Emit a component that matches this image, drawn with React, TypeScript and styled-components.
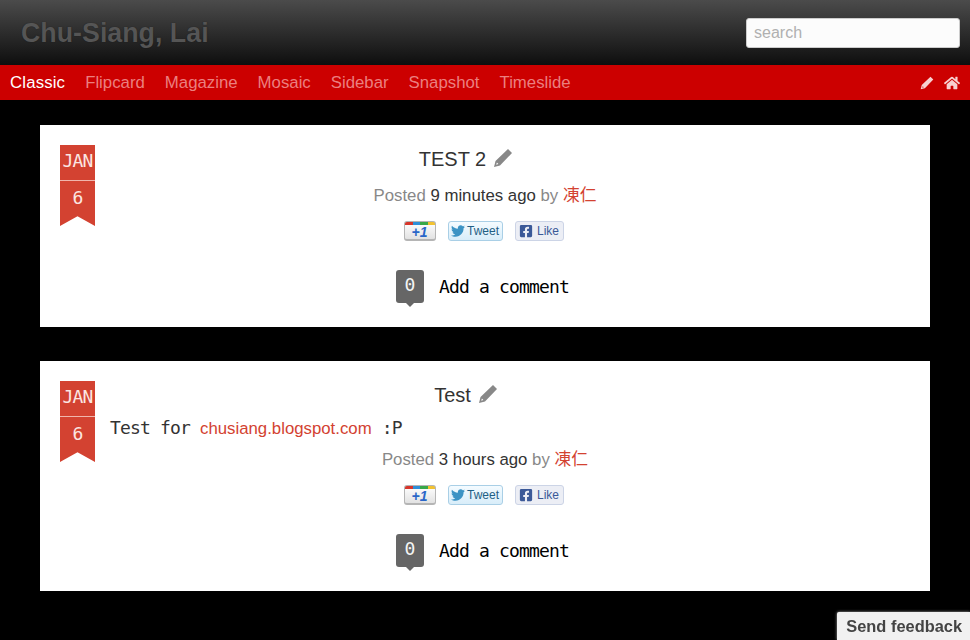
import styled, { createGlobalStyle } from "styled-components";
import { FaFacebookSquare, FaHome, FaTwitter } from "react-icons/fa";

type PostType = {
	title: string;
	age: string;
	body?: boolean;
};

const posts: PostType[] = [
	{ title: "TEST 2", age: "9 minutes ago" },
	{ title: "Test", age: "3 hours ago", body: true },
];

const links = ["Classic", "Flipcard", "Magazine", "Mosaic", "Sidebar", "Snapshot", "Timeslide"];

const Pencil = () => {
	return (
		<svg viewBox="0 0 20 20" width="1em" height="1em" fill="currentColor">
			<path
				fillRule="evenodd"
				d="M15 1 L19 5 L7 17.5 L1 19 L2.5 13 Z M3.9 14.6 L3.2 16.8 L5.4 16.1 Z"
			/>
		</svg>
	);
};

const Post = (props: PostType) => {
	return (
		<Card>
			<Ribbon>
				<Month>JAN</Month>
				<Day>6</Day>
			</Ribbon>
			<Title>
				{props.title}
				<Pencil />
			</Title>
			{props.body && (
				<Body>
					Test for <BodyLink href="#">chusiang.blogspot.com</BodyLink> :P
				</Body>
			)}
			<Meta>
				Posted <Age>{props.age}</Age> by <Author href="#">凍仁</Author>
			</Meta>
			<Social>
				<PlusOne>+1</PlusOne>
				<Tweet>
					<FaTwitter />
					Tweet
				</Tweet>
				<Like>
					<FaFacebookSquare />
					Like
				</Like>
			</Social>
			<Comments>
				<Count>0</Count>
				<AddComment href="#">Add a comment</AddComment>
			</Comments>
		</Card>
	);
};

export default function App() {
	return (
		<>
			<GlobalStyle />
			<Header>
				<Logo>Chu-Siang, Lai</Logo>
				<Search placeholder="search" />
			</Header>
			<Nav>
				{links.map((link, i) => (
					<NavLink key={link} href="#" $active={i === 0}>
						{link}
					</NavLink>
				))}
				<NavIcons>
					<Pencil />
					<FaHome />
				</NavIcons>
			</Nav>
			<Main>
				{posts.map((post) => (
					<Post key={post.title} {...post} />
				))}
			</Main>
			<Feedback>Send feedback</Feedback>
		</>
	);
}

const GlobalStyle = createGlobalStyle`
	html, body {
		margin: 0;
		height: 100%;
		overflow: hidden;
		background: #000;
		font-family: "Liberation Sans", "Noto Sans CJK TC", sans-serif;
	}
`;

const Header = styled.header`
	height: 65px;
	box-sizing: border-box;
	padding: 0 10px 0 21px;
	display: flex;
	align-items: center;
	justify-content: space-between;
	background: linear-gradient(#4b4b4b, #0e0e0e);
`;

const Logo = styled.h1`
	margin: 2px 0 0;
	font-size: 26.8px;
	font-weight: bold;
	color: #555;
	text-shadow: 0 0 1px rgba(0, 0, 0, 0.5);
`;

const Search = styled.input`
	width: 214px;
	height: 30px;
	box-sizing: border-box;
	padding: 0 7px;
	border: 1px solid #ccc;
	border-radius: 3px;
	background: #fcfcfc;
	font-family: inherit;
	font-size: 16px;
	outline: none;

	&::placeholder {
		color: #b0b0b0;
	}
`;

const Nav = styled.nav`
	height: 35px;
	padding: 0 10px;
	display: flex;
	align-items: center;
	gap: 20px;
	background: #cc0000;
`;

const NavLink = styled.a<{ $active?: boolean }>`
	font-size: 16.8px;
	letter-spacing: ${(props) => (props.$active ? "0.15px" : "0")};
	text-decoration: none;
	color: ${(props) => (props.$active ? "#fff" : "#eb7f7f")};
`;

const NavIcons = styled.div`
	margin-left: auto;
	display: flex;
	align-items: center;
	gap: 10px;
	color: #f7d0d0;
	font-size: 14px;

	svg:last-child {
		font-size: 16px;
	}
`;

const Main = styled.main`
	padding: 25px 40px 0;
	display: flex;
	flex-direction: column;
	gap: 34px;
`;

const Card = styled.article`
	position: relative;
	padding: 20px 20px 24px 70px;
	background: #fff;
	text-align: center;
`;

const Ribbon = styled.div`
	position: absolute;
	top: 20px;
	left: 20px;
	width: 35px;
	height: 81px;
	color: #fbe6e2;
	background: #d34231;
	font-family: "DejaVu Sans Mono", monospace;
	font-size: 18px;
	letter-spacing: -0.84px;
	clip-path: polygon(0 0, 100% 0, 100% 100%, 50% 88%, 0 100%);
`;

const Month = styled.div`
	height: 35px;
	line-height: 31px;
	border-bottom: 1px solid #f0b5ac;
`;

const Day = styled.div`
	line-height: 34px;
`;

const Title = styled.h2`
	margin: 0 0 0 -70px;
	padding: 0 18px 4px 0;
	height: 28px;
	font-size: 20px;
	font-weight: normal;
	line-height: 28px;
	color: #333;

	svg {
		margin-left: 7px;
		font-size: 20px;
		color: #888;
		vertical-align: -2px;
	}
`;

const Body = styled.p`
	margin: 0;
	height: 28px;
	line-height: 30px;
	text-align: left;
	color: #333;
	font-family: "DejaVu Sans Mono", monospace;
	font-size: 18px;
	letter-spacing: -0.84px;
`;

const BodyLink = styled.a`
	font-family: "Liberation Sans", sans-serif;
	font-size: 16.8px;
	letter-spacing: 0;
	text-decoration: none;
	color: #d34231;
`;

const Meta = styled.div`
	margin-left: -50px;
	padding: 6px 0 14px;
	height: 24px;
	font-size: 16.8px;
	line-height: 26px;
	color: #888;
`;

const Age = styled.span`
	color: #333;
`;

const Author = styled.a`
	text-decoration: none;
	color: #d34231;
`;

const Social = styled.div`
	margin-left: -53px;
	height: 20px;
	margin-bottom: 29px;
	display: flex;
	justify-content: center;
	gap: 12px;
`;

const SocialButton = styled.span`
	box-sizing: border-box;
	height: 20px;
	display: inline-flex;
	align-items: center;
	justify-content: center;
	gap: 2px;
	border-radius: 3px;
	font-size: 12px;
`;

const PlusOne = styled(SocialButton)`
	width: 32px;
	padding-top: 3px;
	border: 1px solid #b5b5b5;
	border-bottom-width: 2px;
	color: #2a67c8;
	font-size: 14px;
	font-weight: bold;
	font-style: italic;
	background:
		linear-gradient(to right, #d8352a 25%, #2e8fd8 25% 50%, #37a848 50% 75%, #f2c230 75%) top / 100% 3px no-repeat,
		linear-gradient(#fff, #e2e2e2);
`;

const Tweet = styled(SocialButton)`
	width: 55px;
	border: 1px solid #a9cfe6;
	color: #1f5f85;
	background: linear-gradient(#f4fbff, #d8edf9);

	svg {
		font-size: 14px;
		color: #3c93c4;
	}
`;

const Like = styled(SocialButton)`
	width: 49px;
	gap: 4px;
	border: 1px solid #ccd4e6;
	color: #3b5998;
	background: #eceef5;

	svg {
		font-size: 14px;
	}
`;

const Comments = styled.div`
	margin-left: -55px;
	height: 33px;
	display: flex;
	justify-content: center;
	align-items: center;
	gap: 15px;
`;

const Count = styled.span`
	position: relative;
	width: 28px;
	height: 33px;
	border-radius: 3px;
	background: #666;
	color: #f4f4f4;
	text-align: center;
	font-family: "DejaVu Sans Mono", monospace;
	font-size: 18px;
	line-height: 29px;

	&::after {
		content: "";
		position: absolute;
		left: 10px;
		bottom: -4px;
		border: 4px solid transparent;
		border-bottom: 0;
		border-top-color: #666;
	}
`;

const AddComment = styled.a`
	font-family: "DejaVu Sans Mono", monospace;
	font-size: 18px;
	letter-spacing: -0.84px;
	text-decoration: none;
	color: #000;
`;

const Feedback = styled.div`
	position: fixed;
	right: 0;
	bottom: 0;
	height: 28px;
	padding: 0 8px 0 9px;
	box-sizing: border-box;
	border-radius: 2px 0 0 0;
	background: #f1f1f1;
	box-shadow: 0 0 3px #aaa;
	color: #444;
	font-size: 16.4px;
	font-weight: bold;
	line-height: 29px;
`;
